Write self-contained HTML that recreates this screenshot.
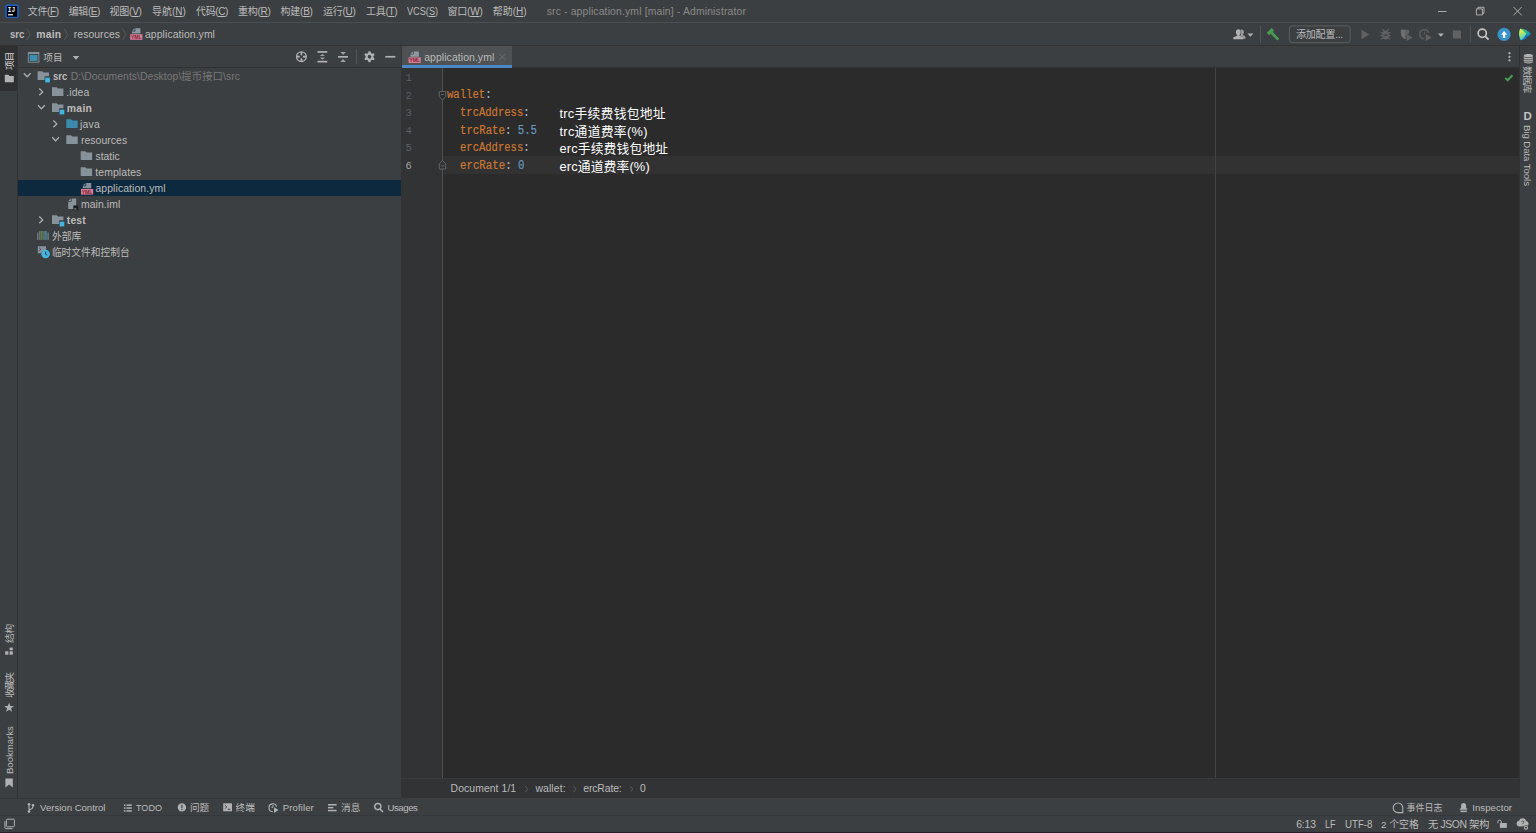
<!DOCTYPE html>
<html lang="zh-CN">
<head>
<meta charset="utf-8">
<title>src - application.yml [main] - Administrator</title>
<style>
*{box-sizing:border-box;margin:0;padding:0}
html,body{width:1536px;height:833px;overflow:hidden;background:#3c3f41}
body{position:relative;font-family:"Liberation Sans","Noto Sans CJK SC",sans-serif;font-size:10.4px;color:#bbbbbb;line-height:1}
.r{position:absolute}
.t{position:absolute;white-space:nowrap;line-height:16px;height:16px}
svg{position:absolute;overflow:visible}
.b{font-weight:bold}
.code{font-family:"Liberation Mono",monospace;font-size:12px;line-height:17.6px;height:17.6px}
.code{-webkit-text-stroke:0.2px}
.k{color:#cc7832}.n{color:#6897bb}.p{color:#a9b7c6}
.ln{color:#5c6064;font-family:"Liberation Mono",monospace;font-size:10.4px;line-height:17.6px;height:17.6px}
.ann{color:#ffffff;font-size:12.8px;line-height:18px;height:18px}
.gray{color:#787878}
.s{font-size:9.6px}
.vt{position:absolute;white-space:nowrap;line-height:12px;height:12px;font-size:9.6px;transform-origin:0 0}
</style>
</head>
<body>
<div class="r" style="left:0px;top:22px;width:1536px;height:1px;background:#4b4e50"></div>
<div class="r" style="left:0px;top:45px;width:1536px;height:1px;background:#323232"></div>
<div class="r" style="left:0px;top:46px;width:17.3px;height:44.5px;background:#2d2f30"></div>
<div class="r" style="left:17px;top:46px;width:1px;height:752px;background:#323232"></div>
<div class="r" style="left:18px;top:67px;width:383px;height:1px;background:#323232"></div>
<div class="r" style="left:18px;top:180px;width:382.5px;height:16px;background:#0d293e"></div>
<div class="r" style="left:400.8px;top:46px;width:0.9px;height:752px;background:#343638"></div>
<div class="r" style="left:401px;top:67px;width:1119px;height:1px;background:#323232"></div>
<div class="r" style="left:401.5px;top:46px;width:110.5px;height:21px;background:#4e5254"></div>
<div class="r" style="left:401.5px;top:65.4px;width:110.5px;height:2.5px;background:#4a88c7"></div>
<div class="r" style="left:401px;top:68px;width:1119px;height:710.4px;background:#2b2b2b"></div>
<div class="r" style="left:443px;top:156.1px;width:1077px;height:17.5px;background:#323232"></div>
<div class="r" style="left:1215px;top:68px;width:1px;height:710.4px;background:#424242"></div>
<div class="r" style="left:401px;top:68px;width:41.5px;height:710.4px;background:#313335"></div>
<div class="r" style="left:442px;top:68px;width:1px;height:710.4px;background:#505050"></div>
<div class="r" style="left:401px;top:778.4px;width:1119px;height:19.6px;background:#313335"></div>
<div class="r" style="left:401px;top:778.2px;width:1119px;height:0.9px;background:#383a3c"></div>
<div class="r" style="left:1519.5px;top:46px;width:16.5px;height:752px;background:#3c3f41"></div>
<div class="r" style="left:1519.4px;top:46px;width:0.9px;height:752px;background:#323232"></div>
<div class="r" style="left:0px;top:797.8px;width:401px;height:0.9px;background:#35383a"></div>
<div class="r" style="left:0px;top:815px;width:1536px;height:0.9px;background:#35373a"></div>
<div class="r" style="left:0px;top:831.7px;width:1536px;height:1.3px;background:#2a1f2d"></div>
<svg style="left:0;top:0" width="1536" height="833" viewBox="0 0 1536 833"><defs><linearGradient id="lg" x1="0" y1="0" x2="1" y2="1"><stop offset="0" stop-color="#1668d6"/><stop offset="1" stop-color="#1c5db8"/></linearGradient></defs><rect x="5.300" y="4.600" width="13.600" height="13.400" rx="1.900" fill="url(#lg)"/><rect x="6.800" y="6.100" width="10.300" height="10.600" rx="0.500" fill="#000"/><text x="7.800" y="12.200" font-family="Liberation Mono, monospace" font-weight="bold" font-size="7.200" fill="#fff" textLength="7.300" lengthAdjust="spacingAndGlyphs">IJ</text><rect x="8" y="14.100" width="5" height="1.300" fill="#e8e8e8"/><path d="M1438 11.5H1446.5" stroke="#b8b8b8" stroke-width="0.9" fill="none"/><path d="M1476.4 8.9h6v6h-6z M1478 8.9V7.3h6v6h-1.6" stroke="#b8b8b8" stroke-width="0.9" fill="none"/><path d="M1513.5 7L1521.7 15.3M1521.7 7L1513.5 15.3" stroke="#b8b8b8" stroke-width="0.9" fill="none"/><path d="M26.8 28.700L30.1 34.400L26.8 40.100" stroke="#585b5d" stroke-width="0.900" fill="none"/><path d="M64.2 28.700L67.5 34.400L64.2 40.100" stroke="#585b5d" stroke-width="0.900" fill="none"/><path d="M122.6 28.700L125.89999999999999 34.400L122.6 40.100" stroke="#585b5d" stroke-width="0.900" fill="none"/><path d="M135.39999999999998 28.3H140.39999999999998V33.5H132.0V31.400000000000002H135.39999999999998Z" fill="#9aa7b0" fill-opacity="0.850"/><path d="M134.6 28.3V30.6H132.0Z" fill="#9aa7b0" fill-opacity="0.850"/><rect x="130.2" y="34.2" width="12.2" height="5.6" fill="#da7d93"/><text x="130.89999999999998" y="39.0" font-family="Liberation Sans, sans-serif" font-weight="bold" font-size="5.2" fill="#76273a" textLength="10.8" lengthAdjust="spacingAndGlyphs">YML</text><path d="M413.8 51.5H418.8V56.699999999999996H410.40000000000003V54.599999999999994H413.8Z" fill="#9aa7b0" fill-opacity="0.850"/><path d="M413.0 51.5V53.8H410.40000000000003Z" fill="#9aa7b0" fill-opacity="0.850"/><rect x="408.6" y="57.4" width="12.2" height="5.6" fill="#da7d93"/><text x="409.3" y="62.199999999999996" font-family="Liberation Sans, sans-serif" font-weight="bold" font-size="5.2" fill="#76273a" textLength="10.8" lengthAdjust="spacingAndGlyphs">YML</text><path d="M86.2 183.1H91.2V188.3H82.8V186.20000000000002H86.2Z" fill="#9aa7b0" fill-opacity="0.850"/><path d="M85.4 183.1V185.4H82.8Z" fill="#9aa7b0" fill-opacity="0.850"/><rect x="81" y="189.0" width="12.2" height="5.6" fill="#da7d93"/><text x="81.7" y="193.8" font-family="Liberation Sans, sans-serif" font-weight="bold" font-size="5.2" fill="#76273a" textLength="10.8" lengthAdjust="spacingAndGlyphs">YML</text><path d="M1241.800 29.600c1.300 0 2.100 1 2.100 2.400c0 1.100-.4 1.900-1 2.500v.6l2 1c.3.200.5.500.5.900v1.700h-2.200v-.4c0-.9-.5-1.500-1.200-1.800l-1.900-.8c.7-.8 1.100-1.900 1.100-3.200c0-1-.2-1.800-.7-2.500c.4-.3.800-.4 1.300-.4z" fill="#afb1b3" fill-opacity="0.800"/><path d="M1238.200 29.300c1.600 0 2.500 1.200 2.500 2.800c0 1.300-.5 2.300-1.200 2.900v.8l3 1.200c.6.300.9.700.9 1.300v.9h-10.200v-.9c0-.6.300-1 .9-1.300l3-1.200v-.8c-.7-.6-1.200-1.600-1.200-2.900c0-1.600.9-2.800 2.300-2.800z" fill="#afb1b3"/><path d="M1247.400 33.400h6l-3 3.300z" fill="#afb1b3"/><rect x="1260" y="26" width="0.900" height="16.400" fill="#555759"/><g transform="translate(1270.500 31.600) rotate(46)" fill="#499c54"><rect x="-1.700" y="-3.300" width="3.400" height="6.800"/><rect x="1.600" y="-1.300" width="9.600" height="2.600"/></g><rect x="1289.400" y="25.900" width="60.800" height="16.700" rx="2.600" fill="none" stroke="#5e6060" stroke-width="0.9"/><path d="M1361.500 29.800l7.800 4.700l-7.800 4.700z" fill="#5f6162"/><ellipse cx="1385.650" cy="35.100" rx="3.300" ry="4.500" fill="#5f6162"/><path d="M1382.400 28.900l2 2.400M1388.900 28.900l-2 2.400M1380.700 32.300l2.400 1M1390.600 32.300l-2.400 1M1380.500 35.700h2.600M1390.800 35.700h-2.600M1380.900 39.300l2.300-1.500M1390.400 39.300l-2.300-1.500" stroke="#5f6162" stroke-width="1.300" fill="none"/><rect x="1383.700" y="34.500" width="3.900" height="1.300" fill="#3c3f41"/><path d="M1400.800 29.700h8.300v3.700l-3.300 2v3.800c-3.200-1.100-5-3.300-5-6.300z" fill="#5f6162"/><path d="M1405.300 29.700h-4.500v3.200c0 3 1.800 5.200 4.500 6.300z" fill="#6b6d6e"/><path d="M1406.500 33.900l6.100 3.500l-6.100 3.500z" fill="#5f6162"/><path d="M1428.700 32.700a4.600 4.600 0 1 0-4.900 6.100" stroke="#5f6162" stroke-width="1.300" fill="none"/><path d="M1425 31.400l-1.100 3.300" stroke="#5f6162" stroke-width="1" fill="none"/><path d="M1425.700 33.900l6.100 3.500l-6.100 3.500z" fill="#5f6162"/><path d="M1437.900 33.400h6l-3 3.300z" fill="#afb1b3"/><rect x="1452.900" y="30.400" width="8.100" height="8.100" fill="#5f6162"/><rect x="1469.900" y="26" width="0.9" height="16.400" fill="#555759"/><circle cx="1482.250" cy="33.250" r="4.100" fill="none" stroke="#c2c2c2" stroke-width="1.700"/><path d="M1485.300 36.400l3.300 3.300" stroke="#c2c2c2" stroke-width="1.900" fill="none"/><circle cx="1504.050" cy="34.400" r="6.550" fill="#3893cc"/><path d="M1504.100 31l3 3.500h-1.800v3.500h-2.400v-3.500h-1.800z" fill="#fff"/><defs><linearGradient id="cg1" x1="0" y1="0" x2="0" y2="1"><stop offset="0" stop-color="#3fc07a"/><stop offset="0.450" stop-color="#159fb5"/><stop offset="0.700" stop-color="#1565c8"/><stop offset="1" stop-color="#1b9fe0"/></linearGradient><linearGradient id="cg2" x1="0.200" y1="0" x2="0.500" y2="1"><stop offset="0" stop-color="#f2f53c"/><stop offset="0.500" stop-color="#a5e27a"/><stop offset="1" stop-color="#2fd0d0"/></linearGradient></defs><path d="M1520.200 28.500C1524.500 28.800 1528.600 31 1530.700 33.800C1528.600 36.900 1524.500 39.700 1520.700 40.200C1518.600 36.500 1518.600 32 1520.200 28.500Z" fill="url(#cg1)"/><path d="M1520.200 28.700C1522.600 29.900 1524.900 31.800 1526.300 34.100C1525.100 36.500 1523.100 38.700 1520.800 40C1518.700 36.500 1518.700 32 1520.200 28.700Z" fill="url(#cg2)"/><rect x="28.300" y="52.400" width="10.600" height="9.800" fill="none" stroke="#87939a" stroke-width="0.9"/><rect x="28.300" y="52.400" width="10.600" height="1.700" fill="#87939a"/><rect x="29.700" y="55" width="7.800" height="5.900" fill="#3a8fb3"/><path d="M72.600 56h6.800l-3.400 3.800z" fill="#afb1b3"/><circle cx="301.400" cy="56.700" r="4.800" fill="none" stroke="#afb1b3" stroke-width="1.400"/><path d="M301.400 52v3.200M301.400 58.200v3.200M296.700 56.700h3.200M302.900 56.700h3.200" stroke="#afb1b3" stroke-width="1.700"/><rect x="317.500" y="51.100" width="9.800" height="1.700" fill="#afb1b3"/><rect x="317.500" y="60.800" width="9.800" height="1.700" fill="#afb1b3"/><path d="M322.400 53.900l2.500 2.100h-5z M322.400 59.700l2.500-2.100h-5z" fill="#afb1b3" fill-opacity="0.850"/><rect x="338.100" y="56" width="9.900" height="1.700" fill="#afb1b3"/><path d="M343.100 54.800l2.800-2.800h-5.600z M343.100 59.100l2.800 2.800h-5.600z" fill="#afb1b3" fill-opacity="0.850"/><rect x="356.100" y="49" width="0.9" height="15.300" fill="#555759"/><g transform="rotate(30 369.500 56.750)"><path d="M374.93 55.86L374.93 57.64L373.23 58.18L372.61 59.27L372.98 61.01L371.44 61.89L370.13 60.70L368.87 60.70L367.56 61.89L366.02 61.01L366.39 59.27L365.77 58.18L364.07 57.64L364.07 55.86L365.77 55.32L366.39 54.23L366.02 52.49L367.56 51.61L368.87 52.80L370.13 52.80L371.44 51.61L372.98 52.49L372.61 54.23L373.23 55.32ZM371.3 56.75A1.8 1.8 0 1 0 367.7 56.75A1.8 1.8 0 1 0 371.3 56.75Z" fill="#afb1b3" fill-rule="evenodd"/></g><rect x="385.300" y="55.900" width="10" height="1.700" fill="#afb1b3"/><path d="M23.8 73.3l3.400 3.500l3.400-3.500" stroke="#adb0b2" stroke-width="1.25" fill="none"/><path d="M37.6 71.2h4.600l1.400 1.400h5.400v3.700h-4.400v3.700h-7z" fill="#87939a"/><rect x="45.2" y="77.7" width="4.700" height="4.700" fill="#40b6e0"/><path d="M39.3 88.5l3.400 3.400l-3.400 3.400" stroke="#adb0b2" stroke-width="1.25" fill="none"/><path d="M52 87.2h4.600l1.400 1.400h5.400v7.400h-11.400z" fill="#87939a"/><path d="M38.0 105.3l3.400 3.500l3.400-3.500" stroke="#adb0b2" stroke-width="1.25" fill="none"/><path d="M52 103.2h4.600l1.400 1.400h5.400v3.700h-4.400v3.700h-7z" fill="#87939a"/><rect x="59.6" y="109.7" width="4.700" height="4.700" fill="#40b6e0"/><path d="M53.4 120.5l3.400 3.400l-3.400 3.400" stroke="#adb0b2" stroke-width="1.25" fill="none"/><path d="M66.3 119.2h4.600l1.400 1.400h5.400v7.400h-11.400z" fill="#3a8bad"/><path d="M52.2 137.3l3.400 3.500l3.400-3.500" stroke="#adb0b2" stroke-width="1.25" fill="none"/><path d="M66.3 135.2h4.600l1.400 1.400h5.400v7.400h-11.400z" fill="#87939a"/><path d="M80.7 151.2h4.600l1.400 1.400h5.400v7.400h-11.400z" fill="#87939a"/><path d="M80.7 167.2h4.600l1.400 1.400h5.400v7.400h-11.400z" fill="#87939a"/><path d="M71.600 198.4h4.600v7h-2.700v3.600h-5.300v-7.200h3.400z" fill="#87939a"/><path d="M70.800 198.4v2.600h-2.600z" fill="#87939a"/><rect x="73.500" y="205.6" width="4.600" height="4.600" fill="#1e1e1e"/><rect x="74.300" y="208.6" width="2" height="0.700" fill="#ddd"/><path d="M39.3 216.5l3.400 3.400l-3.400 3.400" stroke="#adb0b2" stroke-width="1.25" fill="none"/><path d="M52 215.2h4.600l1.400 1.400h5.400v3.700h-4.400v3.700h-7z" fill="#87939a"/><rect x="59.6" y="221.7" width="4.700" height="4.700" fill="#40b6e0"/><rect x="37.3" y="232.6" width="1" height="7.200000000000001" fill="#87939a"/><rect x="39.4" y="231" width="1" height="8.8" fill="#87939a"/><rect x="41.4" y="231" width="1" height="8.8" fill="#62b543"/><rect x="43.5" y="231" width="1" height="8.8" fill="#87939a"/><rect x="45.5" y="231" width="1" height="8.8" fill="#40b6e0"/><rect x="47.6" y="232.6" width="1" height="7.200000000000001" fill="#87939a"/><path d="M37.800 246.3h8.200v4.200a4.300 4.300 0 0 0-4.800 2.800h-3.400z" fill="#87939a"/><path d="M39.200 247.8l1.600 1.500l-1.600 1.500" stroke="#3c3f41" stroke-width="0.800" fill="none"/><circle cx="45.600" cy="254" r="4.300" fill="#40b6e0"/><path d="M45.600 251.6v2.600l1.600 1" stroke="#2b2b2b" stroke-width="0.900" fill="none"/><path d="M4.800 74.800h3.600l1.200 1.200h4.200v6.200h-9z" fill="#afb1b3"/><rect x="5.200" y="651.300" width="3.200" height="3.400" fill="#afb1b3"/><rect x="9.600" y="651.300" width="3.200" height="3.400" fill="#afb1b3"/><rect x="9.600" y="647.600" width="3.200" height="2.600" fill="#afb1b3"/><path d="M9.10 702.60L10.33 705.90L13.86 706.05L11.10 708.25L12.04 711.65L9.10 709.70L6.16 711.65L7.10 708.25L4.34 706.05L7.87 705.90Z" fill="#afb1b3"/><path d="M5.400 778.400h7.400v9l-3.700-3l-3.700 3z" fill="#afb1b3"/><path d="M1523.800 55.800c0-1 2-1.700 4.600-1.700s4.600.7 4.600 1.700v5.900c0 1-2 1.700-4.600 1.700s-4.600-.7-4.600-1.700z" fill="#afb1b3"/><path d="M1523.800 56.900c1.200 1 7.900 1 9.200 0M1523.800 59c1.200 1 7.900 1 9.200 0M1523.800 61.100c1.200 1 7.900 1 9.200 0" stroke="#3c3f41" stroke-width="0.700" fill="none"/><circle cx="1509.450" cy="53.2" r="1.150" fill="#afb1b3"/><circle cx="1509.450" cy="56.8" r="1.150" fill="#afb1b3"/><circle cx="1509.450" cy="60.4" r="1.150" fill="#afb1b3"/><path d="M1505.200 77.900l2.500 2.400l4.700-5.100" stroke="#499c54" stroke-width="2" fill="none"/><path d="M439.300 91.500h6.400v5.200l-3.200 3.300l-3.200-3.300z" fill="#2b2b2b" stroke="#676a6d" stroke-width="0.900"/><path d="M440.800 94.600h3.400" stroke="#676a6d" stroke-width="0.900"/><path d="M439.300 169h6.400v-5.200l-3.200-3.300l-3.200 3.300z" fill="#323232" stroke="#676a6d" stroke-width="0.900"/><path d="M440.800 165.900h3.400" stroke="#676a6d" stroke-width="0.900"/><path d="M499.400 54l5.800 5.800M505.200 54l-5.800 5.800" stroke="#6e7173" stroke-width="0.900" fill="none"/><path d="M525.2 786.200l2.600 3l-2.600 3" stroke="#5c5f61" stroke-width="0.900" fill="none"/><path d="M573.5 786.200l2.600 3l-2.600 3" stroke="#5c5f61" stroke-width="0.900" fill="none"/><path d="M630.2 786.200l2.600 3l-2.600 3" stroke="#5c5f61" stroke-width="0.900" fill="none"/><path d="M29 804v8M29 809.500c3.500 0 4-1.500 4-3.500" stroke="#afb1b3" stroke-width="1.100" fill="none"/><circle cx="29" cy="804.300" r="1.300" fill="#afb1b3"/><circle cx="33" cy="805.300" r="1.300" fill="#afb1b3"/><circle cx="29" cy="811.600" r="1.300" fill="#afb1b3"/><rect x="123.900" y="804.4" width="1.600" height="1.500" fill="#afb1b3"/><rect x="126.400" y="804.4" width="5.400" height="1.500" fill="#afb1b3"/><rect x="123.900" y="807.3" width="1.600" height="1.500" fill="#afb1b3"/><rect x="126.400" y="807.3" width="5.400" height="1.500" fill="#afb1b3"/><rect x="123.900" y="810.2" width="1.600" height="1.500" fill="#afb1b3"/><rect x="126.400" y="810.2" width="5.400" height="1.500" fill="#afb1b3"/><circle cx="181.900" cy="807.400" r="4.200" fill="#afb1b3"/><rect x="181.300" y="804.800" width="1.200" height="3.300" fill="#3c3f41"/><rect x="181.300" y="808.900" width="1.200" height="1.200" fill="#3c3f41"/><rect x="223.200" y="803.300" width="8.800" height="8" fill="#afb1b3"/><path d="M224.800 805.200l2 1.700l-2 1.700" stroke="#3c3f41" stroke-width="0.900" fill="none"/><rect x="227.600" y="808.800" width="2.800" height="0.900" fill="#3c3f41"/><path d="M276.600 806.600a3.900 3.900 0 1 0-4 5" stroke="#afb1b3" stroke-width="1.100" fill="none"/><path d="M273 804.800v2.600h-1.600" stroke="#afb1b3" stroke-width="0.900" fill="none"/><path d="M274 807.200l4.600 2.900l-4.600 2.900z" fill="#afb1b3"/><rect x="328" y="804" width="8.600" height="1.500" fill="#afb1b3"/><rect x="328" y="806.900" width="5.400" height="1.500" fill="#afb1b3"/><rect x="328" y="809.800" width="8.600" height="1.500" fill="#afb1b3"/><circle cx="377.800" cy="806.600" r="3.100" fill="none" stroke="#afb1b3" stroke-width="1.400"/><path d="M380 809l3 3" stroke="#afb1b3" stroke-width="1.600"/><path d="M1398 803a4.800 4.800 0 1 0 0 9.600h4.800v-4.800a4.800 4.800 0 0 0-4.800-4.800z" fill="none" stroke="#afb1b3" stroke-width="1.100"/><path d="M1461.100 805.600a2.500 2.600 0 0 1 5 0v2.600l1.300 .5v1.100h-7.600v-1.100l1.300-.5z" fill="#afb1b3"/><rect x="1460.400" y="810.600" width="6.400" height="1.500" fill="#afb1b3"/><rect x="1499.900" y="823" width="6.900" height="4.900" fill="#afb1b3"/><path d="M1497.800 823.200v-1.300a1.800 1.800 0 0 1 3.600 0v1.300" stroke="#afb1b3" stroke-width="1" fill="none"/><path d="M1518.800 826.400a2.900 2.900 0 0 1 .2-5.700a3.800 3.800 0 0 1 7.200.3a2.700 2.700 0 0 1 .6 5.200z" fill="#afb1b3"/><circle cx="1526" cy="827.800" r="2.600" fill="#3c3f41"/><circle cx="1526" cy="827.800" r="1.600" fill="none" stroke="#afb1b3" stroke-width="1.100"/><path d="M1521.400 821.800c.4-1.100 2.600-1 2.500.4c0 .9-1.200.9-1.200 1.900M1522.700 825.400v.1" stroke="#3c3f41" stroke-width="0.800" fill="none"/><rect x="6.400" y="819.200" width="8" height="7.600" rx="1" fill="none" stroke="#afb1b3" stroke-width="1"/><path d="M4.900 821.200v6.400a1 1 0 0 0 1 1h6.600" stroke="#afb1b3" stroke-width="1" fill="none"/></svg>
<div class="t" style="left:27.8px;top:3.7px;letter-spacing:-0.390px;font-size:10px">文件(<u>F</u>)</div>
<div class="t" style="left:68.7px;top:3.7px;letter-spacing:-0.406px;font-size:10px">编辑(<u>E</u>)</div>
<div class="t" style="left:109.5px;top:3.7px;letter-spacing:-0.231px;font-size:10px">视图(<u>V</u>)</div>
<div class="t" style="left:152px;top:3.7px;font-size:10px">导航(<u>N</u>)</div>
<div class="t" style="left:196px;top:3.7px;letter-spacing:-0.371px;font-size:10px">代码(<u>C</u>)</div>
<div class="t" style="left:238px;top:3.7px;letter-spacing:-0.246px;font-size:10px">重构(<u>R</u>)</div>
<div class="t" style="left:280.5px;top:3.7px;letter-spacing:-0.231px;font-size:10px">构建(<u>B</u>)</div>
<div class="t" style="left:323px;top:3.7px;letter-spacing:-0.246px;font-size:10px">运行(<u>U</u>)</div>
<div class="t" style="left:366px;top:3.7px;letter-spacing:-0.290px;font-size:10px">工具(<u>T</u>)</div>
<div class="t" style="left:406.6px;top:3.7px;transform:scaleX(0.916);transform-origin:0 0;font-size:10px">VCS(<u>S</u>)</div>
<div class="t" style="left:447.4px;top:3.7px;letter-spacing:-0.151px;font-size:10px">窗口(<u>W</u>)</div>
<div class="t" style="left:492.8px;top:3.7px;letter-spacing:-0.021px;font-size:10px">帮助(<u>H</u>)</div>
<div class="t" style="left:546.7px;top:3.8px;letter-spacing:0.148px;color:#8a8a8a">src - application.yml [main] - Administrator</div>
<div class="t b" style="left:9.7px;top:26.6px;transform:scaleX(0.927);transform-origin:0 0">src</div>
<div class="t b" style="left:36.3px;top:26.6px;letter-spacing:0.223px">main</div>
<div class="t" style="left:73.8px;top:26.6px;letter-spacing:0.064px">resources</div>
<div class="t" style="left:145px;top:26.6px;letter-spacing:0.086px">application.yml</div>
<div class="t" style="left:1296px;top:27px;letter-spacing:-0.201px;font-size:10px">添加配置...</div>
<div class="t" style="left:43.3px;top:49.6px;font-size:9.64px">项目</div>
<div class="t b" style="left:52.5px;top:68.7px;transform:scaleX(0.906);transform-origin:0 0">src</div>
<div class="t gray" style="left:70.8px;top:68.7px;letter-spacing:0.039px">D:\Documents\Desktop\提币接口\src</div>
<div class="t" style="left:66.3px;top:84.7px;letter-spacing:0.097px">.idea</div>
<div class="t b" style="left:66.8px;top:100.7px;letter-spacing:0.290px">main</div>
<div class="t" style="left:80px;top:116.7px;letter-spacing:0.224px">java</div>
<div class="t" style="left:80.9px;top:132.7px;letter-spacing:0.076px">resources</div>
<div class="t" style="left:95.5px;top:148.7px;letter-spacing:-0.026px">static</div>
<div class="t" style="left:95.3px;top:164.7px;letter-spacing:0.109px">templates</div>
<div class="t" style="left:95.5px;top:180.7px;letter-spacing:0.093px">application.yml</div>
<div class="t" style="left:80.9px;top:196.7px;letter-spacing:0.093px">main.iml</div>
<div class="t b" style="left:66.8px;top:212.7px;letter-spacing:0.151px">test</div>
<div class="t" style="left:51.9px;top:228.7px;font-size:9.87px">外部库</div>
<div class="t" style="left:51.9px;top:244.7px;font-size:9.72px">临时文件和控制台</div>
<div class="t" style="left:424.2px;top:49.8px;letter-spacing:0.093px">application.yml</div>
<div class="t ln" style="left:405.4px;top:69.9px">1</div>
<div class="t ln" style="left:405.4px;top:87.5px">2</div>
<div class="t ln" style="left:405.4px;top:105.1px">3</div>
<div class="t ln" style="left:405.4px;top:122.7px">4</div>
<div class="t ln" style="left:405.4px;top:140.3px">5</div>
<div class="t ln" style="left:405.4px;top:157.9px;color:#a4a3a3">6</div>
<div class="t code" style="left:447.3px;top:87.3px;transform:scaleX(0.883);transform-origin:0 0"><span class="k">wallet</span><span class="p">:</span></div>
<div class="t code" style="left:460.3px;top:104.9px;transform:scaleX(0.878);transform-origin:0 0"><span class="k">trcAddress</span><span class="p">:</span></div>
<div class="t code" style="left:460.3px;top:122.5px;transform:scaleX(0.891);transform-origin:0 0"><span class="k">trcRate</span><span class="p">: </span><span class="n">5.5</span></div>
<div class="t code" style="left:460.3px;top:140.1px;transform:scaleX(0.878);transform-origin:0 0"><span class="k">ercAddress</span><span class="p">:</span></div>
<div class="t code" style="left:460.3px;top:157.7px;transform:scaleX(0.896);transform-origin:0 0"><span class="k">ercRate</span><span class="p">: </span><span class="n">0</span></div>
<div class="t ann" style="left:559.5px;top:105px;letter-spacing:0.262px">trc手续费钱包地址</div>
<div class="t ann" style="left:559.5px;top:122.6px;letter-spacing:0.293px">trc通道费率(%)</div>
<div class="t ann" style="left:559.5px;top:140.2px;letter-spacing:0.144px">erc手续费钱包地址</div>
<div class="t ann" style="left:559.5px;top:157.8px;letter-spacing:0.142px">erc通道费率(%)</div>
<div class="t" style="left:450.6px;top:781.3px;letter-spacing:0.076px">Document 1/1</div>
<div class="t" style="left:535.4px;top:781.3px;letter-spacing:0.114px">wallet:</div>
<div class="t" style="left:583.3px;top:781.3px;letter-spacing:-0.121px">ercRate:</div>
<div class="t" style="left:640px;top:781.3px">0</div>
<div class="t s" style="left:40.1px;top:799.8px;letter-spacing:-0.016px">Version Control</div>
<div class="t s" style="left:136.1px;top:799.8px;transform:scaleX(0.944);transform-origin:0 0">TODO</div>
<div class="t s" style="left:190px;top:799.8px;letter-spacing:-0.023px">问题</div>
<div class="t s" style="left:235.5px;top:799.8px;letter-spacing:0.077px">终端</div>
<div class="t s" style="left:282.8px;top:799.8px;letter-spacing:0.082px">Profiler</div>
<div class="t s" style="left:341px;top:799.8px;letter-spacing:0.277px">消息</div>
<div class="t s" style="left:387.4px;top:799.8px;letter-spacing:-0.413px">Usages</div>
<div class="t s" style="left:1406.6px;top:799.8px;font-size:8.96px">事件日志</div>
<div class="t s" style="left:1472.3px;top:799.8px;letter-spacing:0.037px">Inspector</div>
<div class="t" style="left:1296.2px;top:816.5px;letter-spacing:-0.166px">6:13</div>
<div class="t" style="left:1325.2px;top:816.5px;transform:scaleX(0.86);transform-origin:0 0">LF</div>
<div class="t" style="left:1344.5px;top:816.5px;transform:scaleX(0.933);transform-origin:0 0">UTF-8</div>
<div class="t" style="left:1381px;top:816.5px;font-size:9.89px">2 个空格</div>
<div class="t" style="left:1428px;top:816.5px;letter-spacing:-0.404px">无 JSON 架构</div>
<div class="vt" style="left:4.0px;top:69.5px;transform:rotate(-90deg);letter-spacing:-0.788px;color:#d4d4d4">项目</div>
<div class="vt" style="left:4.0px;top:643px;transform:rotate(-90deg);letter-spacing:-0.087px">结构</div>
<div class="vt" style="left:4.0px;top:697.8px;transform:rotate(-90deg);letter-spacing:-1.391px">收藏夹</div>
<div class="vt" style="left:4.0px;top:774.3px;transform:rotate(-90deg);letter-spacing:-0.036px">Bookmarks</div>
<div class="vt" style="left:1533.2px;top:66.4px;transform:rotate(90deg);letter-spacing:-0.741px">数据库</div>
<div class="vt" style="left:1533.2px;top:125.2px;transform:rotate(90deg);letter-spacing:-0.053px">Big Data Tools</div>
<div class="t b" style="left:1523.4px;top:108.2px;font-size:11.5px;color:#c4c4c4">D</div>
</body>
</html>
